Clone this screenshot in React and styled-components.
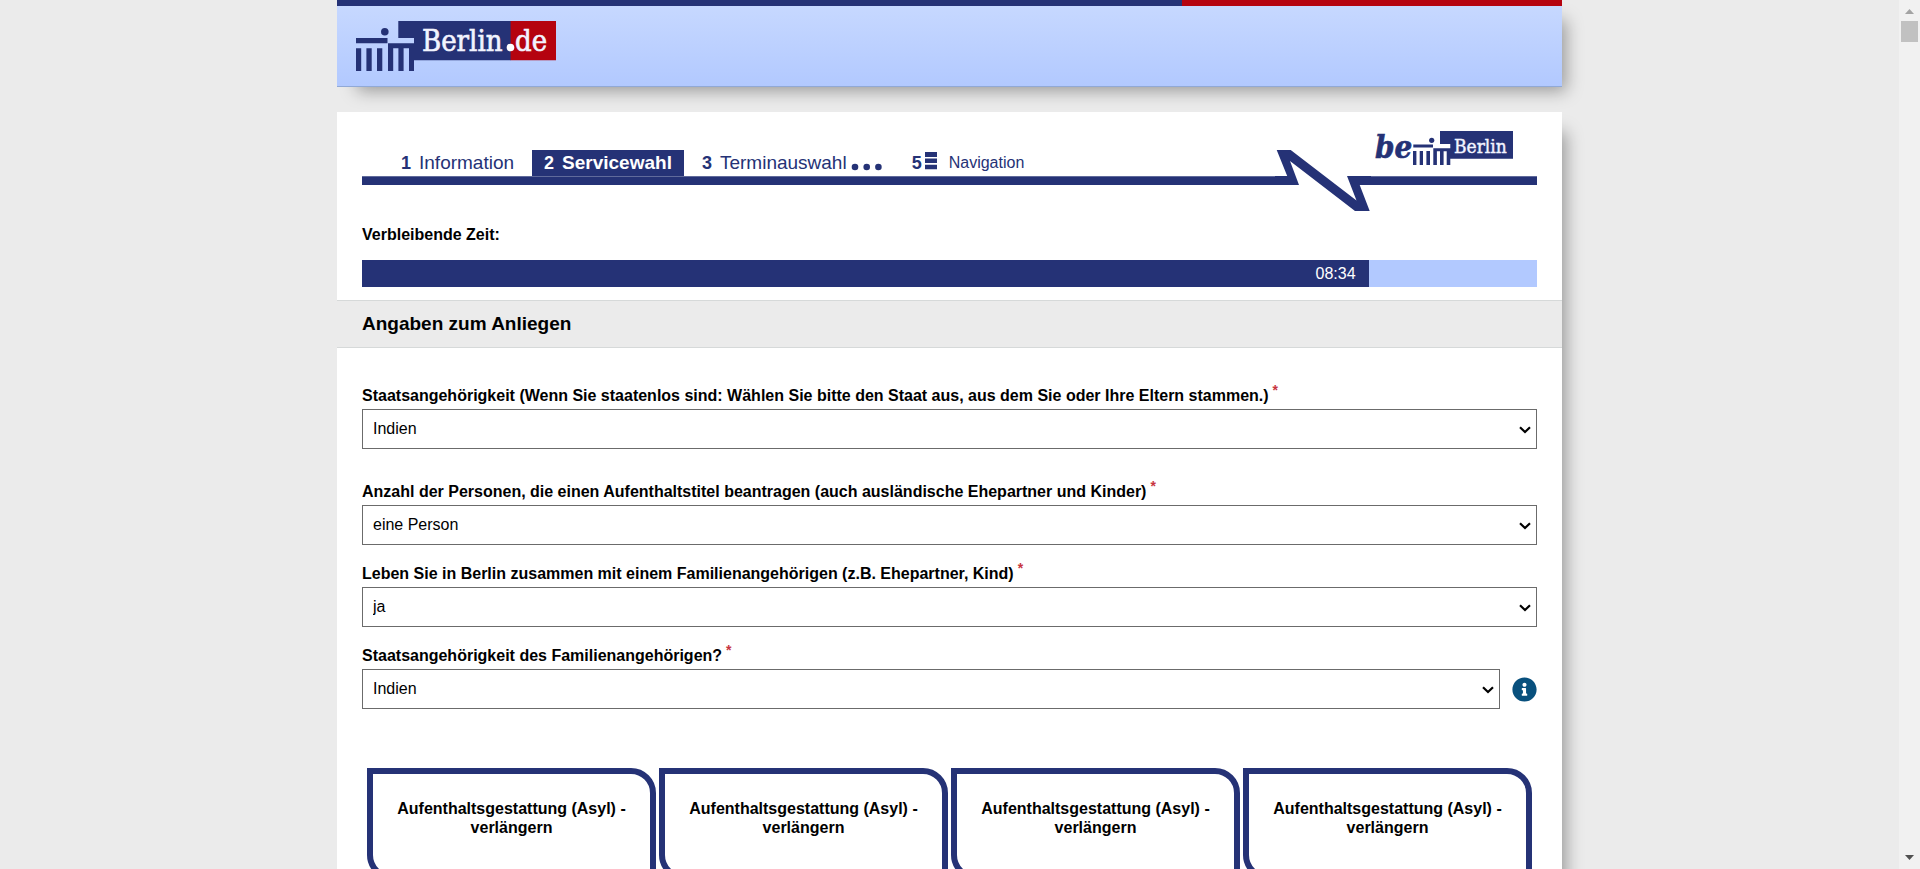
import React from "react";
import styled, { createGlobalStyle, css } from "styled-components";
import { FaInfoCircle } from "react-icons/fa";

const navy = "#253276";
const red = "#b5030f";
const sky = "#b2c9ff";
const grey = "#ebebeb";

const GlobalStyle = createGlobalStyle`
  * { box-sizing: border-box; }
  body {
    margin: 0;
    background: ${grey};
    color: #000;
    font-family: Arial, "Liberation Sans", sans-serif;
    font-size: 16px;
    line-height: 20px;
  }
`;

const Shell = styled.div`
  display: flex;
  height: 100vh;
  overflow: hidden;
`;

const Content = styled.div`
  flex: 1;
  min-width: 0;
`;

const Column = styled.div`
  width: 100%;
  max-width: 1225px;
  margin: 0 auto;
`;

const raised = css`
  box-shadow: 12px 12px 16px -8px rgba(0, 0, 0, 0.35);
`;

const StateHeader = styled.header`
  ${raised}
  margin-bottom: 25px;
  border-bottom: 1px solid #91a9d6;
  background: linear-gradient(#c8d9ff, ${sky});
`;

const Stripe = styled.div`
  height: 6px;
  background: linear-gradient(to right, ${navy} 69%, ${red} 69%);
`;

const HomeLink = styled.a`
  display: block;
  width: 200px;
  margin: 15px 19px;
`;

const Drawing = styled.svg`
  display: block;
  overflow: visible;
`;

const Card = styled.main`
  ${raised}
  background: #fff;
`;

const Progress = styled.nav`
  display: flex;
  align-items: flex-start;
  padding: 19px 25px 0;
`;

const StepsColumn = styled.div`
  flex: 1;
  margin-top: 19px;
`;

const BrandColumn = styled.div`
  display: flex;
  flex-direction: column;
  gap: 11px;
  width: 166px;
`;

const BrandLink = styled.a`
  padding-left: 4px;
`;

const Rule = styled.div`
  height: 9px;
  border-top: 1px solid #606a9b;
  background: ${navy};
`;

const Zigzag = styled(Drawing)`
  margin-top: 19px;
`;

const Steps = styled.ol`
  display: flex;
  gap: 6px;
  height: 26px;
  margin: 0;
  padding: 0 0 0 27px;
  list-style: none;
  font-size: 19px;
  line-height: 26px;
`;

const Step = styled.li`
  display: flex;
  align-items: center;
  gap: 8px;
  padding: 0 12px;
  font-weight: ${(p) => (p.$active ? "bold" : "normal")};
  color: ${(p) => (p.$active ? "#fff" : navy)};
  background: ${(p) => (p.$active ? navy : "transparent")};
`;

const StepNumber = styled.b`
  display: flex;
  align-items: center;
  gap: 3px;
  font-size: 18px;
`;

const StepName = styled.span`
  display: flex;
  align-items: center;
  gap: 4px;
  padding-left: ${(p) => (p.$small ? 4 : 0)}px;
  font-size: ${(p) => (p.$small ? 16 : 19)}px;
`;

const Timer = styled.section`
  padding: 14px 25px 13px;
`;

const TimerTitle = styled.h2`
  margin: 0 0 15px;
  font-size: 16px;
  line-height: 20px;
`;

const TimerTrack = styled.div`
  height: 27px;
  background: ${sky};
`;

const TimerFill = styled.div`
  height: 27px;
  padding-right: 13px;
  background: ${navy};
  color: #fff;
  line-height: 27px;
  text-align: right;
`;

const SectionTitle = styled.h2`
  margin: 0;
  padding: 11px 25px 12px;
  border: solid #d6d9d9;
  border-width: 1px 0;
  background: ${grey};
  font-size: 19px;
  line-height: 23px;
`;

const Form = styled.form`
  display: flex;
  flex-direction: column;
  gap: 19px;
  padding: 38px 25px;
`;

const Field = styled.div`
  display: grid;
  grid-template-columns: 1fr auto;
  align-items: center;
  gap: 3px 12px;
  margin-bottom: ${(p) => (p.$spaced ? 14 : 0)}px;
`;

const Label = styled.label`
  grid-column: 1 / -1;
  height: 20px;
  font-weight: bold;
`;

const Required = styled.span`
  margin-left: 4px;
  color: #c8353f;
  font-size: 14px;
  line-height: 0;
  vertical-align: 6px;
`;

const SelectBox = styled.div`
  grid-column: ${(p) => (p.$hinted ? "auto" : "1 / -1")};
  position: relative;
`;

const Select = styled.select`
  display: block;
  width: 100%;
  height: 40px;
  padding: 0 24px 0 10px;
  border: 1px solid #6b6b6b;
  border-radius: 0;
  appearance: none;
  background: #fff;
  color: #000;
  font: inherit;
`;

const Chevron = styled.svg`
  position: absolute;
  top: 17px;
  right: 6px;
  pointer-events: none;
`;

const InfoButton = styled.button`
  display: block;
  padding: 0;
  border: 0;
  background: none;
  color: #08507d;
  font-size: 25px;
  line-height: 0;
`;

const Offers = styled.div`
  display: grid;
  grid-template-columns: repeat(4, 1fr);
  gap: 3px;
  margin-top: 40px;
  padding: 0 5px;
`;

const Offer = styled.button`
  height: 112px;
  padding: 25px 16px;
  display: flex;
  align-items: flex-start;
  justify-content: center;
  border: 6px solid ${navy};
  border-radius: 0 25px;
  background: #fff;
  color: #000;
  font: inherit;
  font-weight: bold;
  line-height: 19px;
  text-align: center;
`;

const Scrollbar = styled.div`
  display: flex;
  flex-direction: column;
  align-items: center;
  width: 21px;
  background: #f1f1f1;
`;

const Thumb = styled.div`
  width: 17px;
  height: 21px;
  margin-bottom: auto;
  background: #c1c1c1;
`;

const slab = '"DejaVu Serif Condensed", "DejaVu Serif", serif';

function BerlinLogo() {
  return (
    <Drawing width="200" height="50" viewBox="0 0 200 50" role="img" aria-label="Berlin.de">
      <g fill={navy}>
        <path d="M42.3 0H155V39.3H58V50H53V27.3H47.6V50H42.4V27.3H37.2V50H32V22.3H58V17H42.3Z" />
        <path d="M0 17H31.5V22.3H0ZM0 27.3H5.2V50H0ZM10.4 27.3H15.7V50H10.4ZM21 27.3H26.3V50H21Z" />
        <circle cx="28.8" cy="10.7" r="3.8" />
      </g>
      <path fill={red} d="M154.6 0H200V39.3H154.6Z" />
      <g fill="#f2f4ff" stroke="#f2f4ff" strokeWidth="0.6" fontFamily={slab} fontSize="29">
        <text x="66" y="30">Berlin</text>
        <text x="159" y="30">de</text>
      </g>
      <circle cx="154.5" cy="26.5" r="3.8" fill="#fff" />
    </Drawing>
  );
}

function BeBerlinLogo() {
  return (
    <Drawing width="138" height="34" viewBox="0 0 138 34" role="img" aria-label="be Berlin">
      <g fill={navy}>
        <path d="M65 0H138V27.8H75.3V34H71.7V20.2H68.6V34H65V20.2H61.9V34H58.3V17.3H75.3V13H65Z" />
        <path d="M38.3 13.5H58V16.5H38.3ZM38 20H41.4V34H38ZM44.7 20H48V34H44.7ZM51.4 20H55V34H51.4Z" />
        <circle cx="56.7" cy="9.3" r="2.6" />
        <text
          x="0"
          y="27"
          stroke={navy}
          strokeWidth="0.6"
          fontFamily={slab}
          fontWeight="bold"
          fontStyle="italic"
          fontSize="31"
        >
          be
        </text>
      </g>
      <text x="79" y="22" fill="#f2f4ff" stroke="#f2f4ff" strokeWidth="0.4" fontFamily={slab} fontSize="19">
        Berlin
      </text>
    </Drawing>
  );
}

function ZigzagLine() {
  return (
    <Zigzag width="96" height="61" viewBox="0 0 96 61" aria-hidden="true">
      <path
        fill={navy}
        d="M1.7 0H15.7L81.5 50.5L72 26H96V35H84.7L94.7 61H80L15 11L24 35H0V26H12.2Z"
      />
    </Zigzag>
  );
}

const fields = [
  {
    id: "nationality",
    label:
      "Staatsangehörigkeit (Wenn Sie staatenlos sind: Wählen Sie bitte den Staat aus, aus dem Sie oder Ihre Eltern stammen.)",
    value: "Indien",
    spaced: true,
  },
  {
    id: "persons",
    label: "Anzahl der Personen, die einen Aufenthaltstitel beantragen (auch ausländische Ehepartner und Kinder)",
    value: "eine Person",
  },
  {
    id: "family",
    label: "Leben Sie in Berlin zusammen mit einem Familienangehörigen (z.B. Ehepartner, Kind)",
    value: "ja",
  },
  {
    id: "family-nationality",
    label: "Staatsangehörigkeit des Familienangehörigen?",
    value: "Indien",
    hinted: true,
  },
];

const offers = [1, 2, 3, 4].map((id) => ({ id, title: "Aufenthaltsgestattung (Asyl) - verlängern" }));

export default function App() {
  return (
    <Shell>
      <GlobalStyle />
      <Content>
        <Column>
          <StateHeader>
            <Stripe />
            <HomeLink href="#">
              <BerlinLogo />
            </HomeLink>
          </StateHeader>

          <Card>
            <Progress>
              <StepsColumn>
                <Steps>
                  <Step>
                    <StepNumber>1</StepNumber>
                    <StepName>Information</StepName>
                  </Step>
                  <Step $active>
                    <StepNumber>2</StepNumber>
                    <StepName>Servicewahl</StepName>
                  </Step>
                  <Step>
                    <StepNumber>3</StepNumber>
                    <StepName>
                      Terminauswahl
                      <Drawing width="31" height="18" viewBox="0 0 31 18" fill={navy} aria-hidden="true">
                        <circle cx="4" cy="13" r="3.3" />
                        <circle cx="15.7" cy="13" r="3.3" />
                        <circle cx="27.4" cy="13" r="3.3" />
                      </Drawing>
                    </StepName>
                  </Step>
                  <Step>
                    <StepNumber>
                      5
                      <Drawing width="12" height="22" viewBox="0 0 12 22" fill={navy} aria-hidden="true">
                        <path d="M0 0H12V5H0ZM0 6.5H12V11H0ZM0 12.8H12V17.3H0Z" />
                      </Drawing>
                    </StepNumber>
                    <StepName $small>Navigation</StepName>
                  </Step>
                </Steps>
                <Rule />
              </StepsColumn>
              <ZigzagLine />
              <BrandColumn>
                <BrandLink href="#">
                  <BeBerlinLogo />
                </BrandLink>
                <Rule />
              </BrandColumn>
            </Progress>

            <Timer>
              <TimerTitle>Verbleibende Zeit:</TimerTitle>
              <TimerTrack>
                <TimerFill style={{ width: `${(514 / 600) * 100}%` }}>08:34</TimerFill>
              </TimerTrack>
            </Timer>

            <SectionTitle>Angaben zum Anliegen</SectionTitle>

            <Form>
              {fields.map((f) => (
                <Field key={f.id} $spaced={f.spaced}>
                  <Label htmlFor={f.id}>
                    {f.label}
                    <Required>*</Required>
                  </Label>
                  <SelectBox $hinted={f.hinted}>
                    <Select id={f.id} defaultValue={f.value}>
                      <option>{f.value}</option>
                    </Select>
                    <Chevron width="12" height="8" viewBox="0 0 12 8" aria-hidden="true">
                      <path d="M1 1.200L6 6L11 1.200" fill="none" stroke="#000" strokeWidth="2.2" />
                    </Chevron>
                  </SelectBox>
                  {f.hinted && (
                    <InfoButton type="button" aria-label="Information">
                      <FaInfoCircle />
                    </InfoButton>
                  )}
                </Field>
              ))}
              <Offers>
                {offers.map((o) => (
                  <Offer key={o.id} type="button">
                    {o.title}
                  </Offer>
                ))}
              </Offers>
            </Form>
          </Card>
        </Column>
      </Content>
      <Scrollbar aria-hidden="true">
        <Drawing width="21" height="21" viewBox="0 0 21 21" fill="#a3a3a3">
          <path d="M6 14L10.500 9L15 14Z" />
        </Drawing>
        <Thumb />
        <Drawing width="21" height="21" viewBox="0 0 21 21" fill="#505050">
          <path d="M6 7L10.500 12L15 7Z" />
        </Drawing>
      </Scrollbar>
    </Shell>
  );
}
